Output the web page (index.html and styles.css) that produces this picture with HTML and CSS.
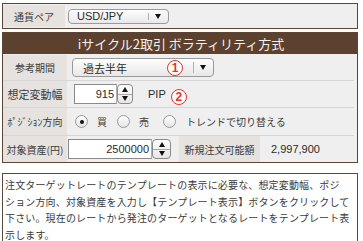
FILE: index.html
```html
<!DOCTYPE html>
<html lang="ja">
<head>
<meta charset="utf-8">
<title>iサイクル2取引</title>
<link rel="stylesheet" href="styles.css">
</head>
<body>
<div class="pair-box">
  <div class="label label-pair">通貨ペア</div>
  <div class="select sel-pair">
    <span class="sel-text latin">USD/JPY</span>
    <span class="sel-btn"><span class="tri"></span></span>
  </div>
</div>

<div class="panel">
  <div class="panel-title">iサイクル2取引 ボラティリティ方式</div>
  <div class="rows">
    <div class="row r1">
      <div class="label label-small">参考期間</div>
      <div class="select sel-period">
        <span class="sel-text">過去半年</span>
        <span class="sel-btn"><span class="tri"></span></span>
        <span class="badge badge-over">1</span>
      </div>
    </div>
    <div class="row r2">
      <div class="label">想定変動幅</div>
      <div class="num num-range latin">915</div>
      <div class="spin"><span class="up"><span class="tri-up"></span></span><span class="down"><span class="tri"></span></span></div>
      <span class="unit latin">PIP</span>
      <span class="badge badge-inline">2</span>
    </div>
    <div class="row r3">
      <div class="label">ﾎﾟｼﾞｼｮﾝ方向</div>
      <span class="radio on r-buy"></span><span class="opt">買</span>
      <span class="radio r-sell"></span><span class="opt">売</span>
      <span class="radio r-trend"></span><span class="opt opt-trend">トレンドで切り替える</span>
    </div>
    <div class="row r4">
      <div class="label">対象資産(円)</div>
      <div class="num num-asset latin">2500000</div>
      <div class="spin spin-wide"><span class="up"><span class="tri-up"></span></span><span class="down"><span class="tri"></span></span></div>
      <div class="label label-avail">新規注文可能額</div>
      <span class="value latin">2,997,900</span>
    </div>
  </div>
</div>

<div class="note">
  <p>注文ターゲットレートのテンプレートの表示に必要な、想定変動幅、ポジ<br>ション方向、対象資産を入力し【テンプレート表示】ボタンをクリックして<br>下さい。現在のレートから発注のターゲットとなるレートをテンプレート表<br>示します。</p>
</div>
</body>
</html>
```

FILE: styles.css
```css
* { box-sizing: border-box; }

body {
  margin: 0;
  background: #ffffff;
  font-family: "Noto Sans CJK JP", "Noto Sans", sans-serif;
  color: #3a3a3a;
}

.latin {
  font-family: "Liberation Sans", Arial, sans-serif;
}

.label {
  background: #e5e2df;
  display: flex;
  align-items: center;
  justify-content: center;
  font-size: 11px;
  color: #3a3a3a;
  white-space: nowrap;
}

/* top currency pair box */
.pair-box {
  margin: 3px 5px 0 2px;
  height: 26px;
  border: 1px solid #5c4533;
  background: #efefef;
  display: flex;
  align-items: center;
  padding: 1px 0;
}

.label-pair {
  width: 62px;
  height: 100%;
  font-size: 10px;
}

.select {
  position: relative;
  display: flex;
  align-items: center;
  border: 1px solid #9a9a9a;
  border-radius: 4px;
  background: linear-gradient(#fdfdfd, #e8e8e8);
}

.sel-text {
  flex: 1;
  font-size: 11px;
  color: #2a2a2a;
  white-space: nowrap;
}

.sel-btn {
  width: 20px;
  align-self: stretch;
  display: flex;
  align-items: center;
  justify-content: center;
  position: relative;
}

.sel-btn::before {
  content: "";
  position: absolute;
  left: 0;
  top: 3px;
  bottom: 3px;
  border-left: 1px solid #b0b0b0;
}

.tri {
  width: 0;
  height: 0;
  border-left: 3.5px solid transparent;
  border-right: 3.5px solid transparent;
  border-top: 5px solid #111;
}

.tri-up {
  width: 0;
  height: 0;
  border-left: 3.5px solid transparent;
  border-right: 3.5px solid transparent;
  border-bottom: 5px solid #111;
}

.sel-pair {
  margin-left: 3px;
  width: 101px;
  height: 15px;
}

.sel-pair .sel-text {
  padding-left: 8px;
}

/* main panel */
.panel {
  margin: 3px 5px 0 2px;
  border: 1px solid #5c4533;
  background: #efefef;
}

.panel-title {
  height: 21px;
  background: #5c412e;
  color: #f6f0ea;
  font-size: 13px;
  display: flex;
  align-items: center;
  justify-content: center;
  padding-left: 2px;
  white-space: nowrap;
}

.rows {
  padding-top: 1px;
}

.row {
  display: flex;
  align-items: center;
  margin-right: 3px;
  border-bottom: 1px solid #d6d6d6;
}

.row > .label {
  align-self: stretch;
  width: 64px;
}

.r1 { height: 26px; }
.r2 { height: 27px; }
.r3 { height: 28px; }
.r4 { height: 26px; border-bottom: none; }

.label-small { font-size: 10px; }
.r3 .label, .r4 .label { font-size: 10px; }

.sel-period {
  margin-left: 5px;
  width: 142px;
  height: 19px;
}

.sel-period .sel-text {
  padding-left: 10px;
}

.badge {
  width: 16px;
  height: 16px;
  border: 1.5px solid #e8302a;
  border-radius: 50%;
  color: #e8302a;
  font-family: "Liberation Sans", Arial, sans-serif;
  font-weight: bold;
  font-size: 12px;
  display: flex;
  align-items: center;
  justify-content: center;
  background: #fff;
}

.badge-over {
  position: absolute;
  left: 94px;
  top: 1px;
}

.badge-inline {
  margin-left: 5px;
  margin-top: 6px;
}

.num {
  height: 20px;
  border: 1px solid #8a8a8a;
  border-right-color: #b0b0b0;
  background: #fff;
  font-size: 11px;
  color: #2a2a2a;
  text-align: right;
  padding-right: 2px;
  line-height: 18px;
}

.num-range {
  margin-left: 7px;
  width: 43px;
}

.num-asset {
  margin-left: 1px;
  width: 84px;
}

.spin {
  width: 16px;
  height: 20px;
  border: 1px solid #8a8a8a;
  border-radius: 4px;
  background: linear-gradient(#fdfdfd, #e6e6e6);
  display: flex;
  flex-direction: column;
}

.spin-wide { width: 19px; }

.spin .up,
.spin .down {
  flex: 1;
  display: flex;
  align-items: center;
  justify-content: center;
}

.spin .down {
  border-top: 1px solid #a8a8a8;
}

.unit {
  margin-left: 15px;
  font-size: 11px;
  color: #2a2a2a;
}

.radio {
  width: 13px;
  height: 13px;
  border: 1px solid #9a9a9a;
  border-radius: 50%;
  background: linear-gradient(#ffffff, #e4e4e4);
  display: flex;
  align-items: center;
  justify-content: center;
}

.radio.on::after {
  content: "";
  width: 4px;
  height: 4px;
  border-radius: 50%;
  background: #111;
}

.r-buy { margin-left: 8px; }
.r-sell { margin-left: 10px; }
.r-trend { margin-left: 14px; }

.opt {
  font-size: 10px;
  color: #3a3a3a;
  margin-left: 9px;
}

.opt-trend {
  margin-left: 10px;
  font-size: 10px;
}

.label-avail {
  margin-left: 8px;
  width: 81px;
}

.row > .label-avail {
  width: 81px;
}

.value {
  margin-left: 11px;
  font-size: 11px;
  color: #2a2a2a;
}

/* note */
.note {
  margin: 10px 5px 0 2px;
  border: 1px solid #5a4a3e;
  padding: 3px 2px 10px 2px;
  min-height: 80px;
  background: #fff;
}

.note p {
  margin: 0;
  font-size: 10px;
  letter-spacing: 0.15px;
  line-height: 16.7px;
  color: #3a3a3a;
  white-space: nowrap;
}
```
